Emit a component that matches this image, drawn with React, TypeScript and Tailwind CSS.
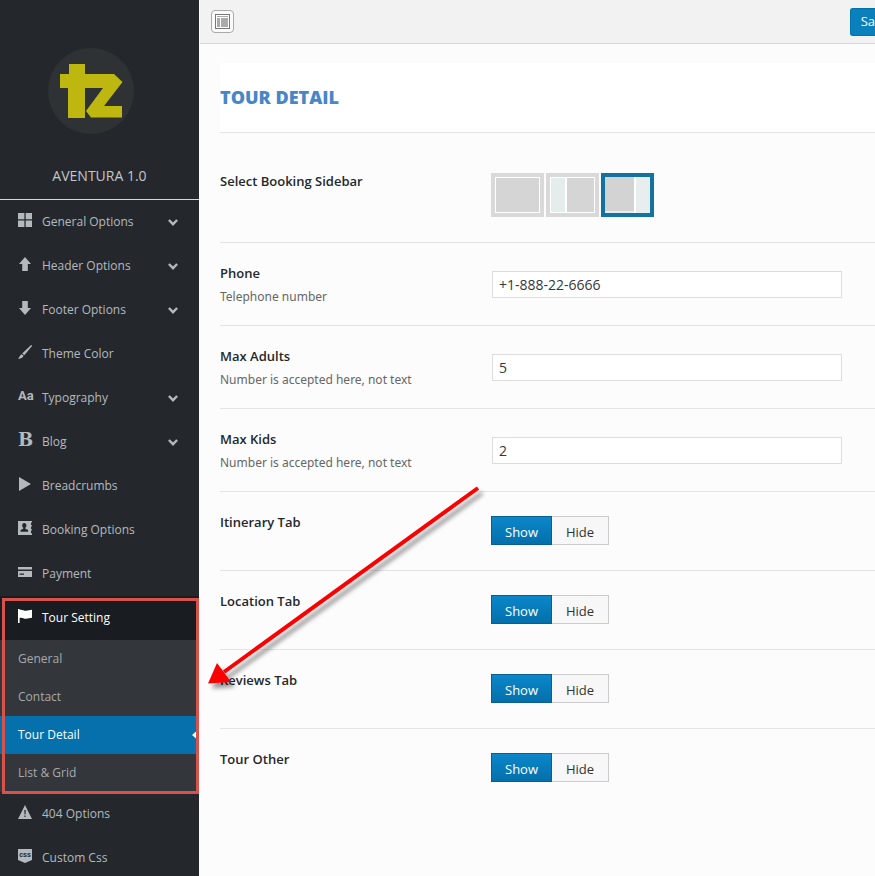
import React from "react";

type IconProps = { children: React.ReactNode };

function Icon({ children }: IconProps) {
  return (
    <svg viewBox="0 0 14 14" className="size-[14px]" fill="currentColor" aria-hidden="true">
      {children}
    </svg>
  );
}

type MenuItem = { label: string; icon: React.ReactNode; expandable?: boolean };

const topItems: MenuItem[] = [
  {
    label: "General Options",
    expandable: true,
    icon: <Icon><path d="M0 0h6.4v6.2H0zM7.7 0H14v6.2H7.7zM0 7.6h6.4V14H0zM7.7 7.6H14V14H7.7z" /></Icon>,
  },
  {
    label: "Header Options",
    expandable: true,
    icon: <Icon><path d="M7 0l6 7H9.8v7H4.2V7H1z" /></Icon>,
  },
  {
    label: "Footer Options",
    expandable: true,
    icon: <Icon><path d="M7 14L1 7h3.2V0h5.6v7H13z" /></Icon>,
  },
  {
    label: "Theme Color",
    icon: (
      <Icon>
        <path d="M13.8.2c.3.4.1.9-.2 1.400L6.300 10.200 4.200 8.600 12.600.6c.4-.4.9-.7 1.200-.4zM3.600 9.200l2 1.600C4.900 12.600 3 13.800.3 13.900.9 12.500 1.900 10.400 3.600 9.200z" />
      </Icon>
    ),
  },
  {
    label: "Typography",
    expandable: true,
    icon: <span aria-hidden="true" className="font-['Liberation_Sans_Narrow','Roboto',sans-serif] text-[13px] leading-[14px] font-bold">Aa</span>,
  },
  {
    label: "Blog",
    expandable: true,
    icon: <span aria-hidden="true" className="font-['DejaVu_Serif',serif] text-[18px] leading-[14px] font-bold">B</span>,
  },
  { label: "Breadcrumbs", icon: <Icon><path d="M1 0l12 7-12 7z" /></Icon> },
  {
    label: "Booking Options",
    icon: (
      <Icon>
        <path
          fillRule="evenodd"
          d="M0 0h14v1.500h-1v2.700h1v1.300h-1v2.700h1v1.300h-1v2.700h1V14H0zM6.300 2C5 2 4.200 3 4.200 4.300c0 1 .4 1.900 1 2.400v1L2.500 9v1.700h7.600V9L7.400 7.700v-1c.6-.5 1-1.400 1-2.400C8.400 3 7.600 2 6.300 2z"
        />
      </Icon>
    ),
  },
  {
    label: "Payment",
    icon: <Icon><path fillRule="evenodd" d="M0 2h14v2.500H0zM0 6h14v6H0zM1.500 8.500v1.200h4.500V8.500z" /></Icon>,
  },
];

const bottomItems: MenuItem[] = [
  {
    label: "404 Options",
    icon: <Icon><path fillRule="evenodd" d="M7 0l7 14H0zM6.300 5l.2 4.500h1L7.700 5zM6.400 10.500V12h1.200v-1.500z" /></Icon>,
  },
  {
    label: "Custom Css",
    icon: (
      <Icon>
        <path d="M0 0h14v11L7 14l-7-3z" />
        <text x="7" y="8" textAnchor="middle" fontSize="7" fontWeight="700" fill="#23282d" fontFamily="Liberation Sans, sans-serif">
          css
        </text>
      </Icon>
    ),
  },
];

const subItems = ["General", "Contact", "Tour Detail", "List & Grid"];

function MenuLink({ item, active }: { item: MenuItem; active?: boolean }) {
  return (
    <a
      href="#"
      className={
        active
          ? "flex h-11 items-center bg-[#191c21] pl-[18px] pr-[21px] text-white"
          : "flex h-11 items-center pl-[18px] pr-[21px] text-[#b4b9be]"
      }
    >
      <span className="flex w-6 items-center pb-1">{item.icon}</span>
      <span className="flex-1">{item.label}</span>
      {item.expandable && (
        <svg viewBox="0 0 10 7" className="h-[7px] w-[10px]" fill="none" stroke="currentColor" strokeWidth="2.400" aria-hidden="true">
          <path d="M.9 1L5 5.200 9.100 1" />
        </svg>
      )}
    </a>
  );
}

function Logo() {
  return (
    <svg viewBox="0 0 86 86" className="size-[86px]" role="img" aria-label="tz">
      <circle cx="43" cy="43" r="43" fill="#2f3234" />
      <path
        fill="#bdb70f"
        d="M21 16h16v10h29l8.500 8L56 58h18v11.500H43L38 63l17-23H37v30H20V40h-8V26h9z"
      />
    </svg>
  );
}

function Sidebar() {
  return (
    <nav className="w-[199px] shrink-0 bg-[#24282d] text-xs">
      <div className="flex h-[200px] flex-col border-b border-[#d5d7d8] pt-12">
        <div className="pl-12">
          <Logo />
        </div>
        <span className="mt-8 text-center text-sm leading-5 text-[#c3c6c9]">AVENTURA 1.0</span>
      </div>
      {topItems.map((item) => (
        <MenuLink key={item.label} item={item} />
      ))}
      <div className="relative">
        <MenuLink
          active
          item={{ label: "Tour Setting", icon: <Icon><path d="M0 0h1.600v.8C4 .2 5.800 1.800 8 1.800c2 0 4-1 6-1v8c-2 0-4 1-6 1-2.200 0-4-1.600-6.400-1V14H0z" /></Icon> }}
        />
        <div className="bg-[#33363b]">
          {subItems.map((label) =>
            label === "Tour Detail" ? (
              <a key={label} href="#" aria-current="page" className="flex h-[38px] items-center justify-between bg-[#0570ab] pl-[18px] text-white">
                {label}
                <svg viewBox="0 0 7 12" className="h-3 w-[7px]" fill="#fff" aria-hidden="true">
                  <path d="M7 0v12L0 6z" />
                </svg>
              </a>
            ) : (
              <a key={label} href="#" className="flex h-[38px] items-center pl-[18px] text-[#a7aaad]">
                {label}
              </a>
            ),
          )}
        </div>
        <div className="pointer-events-none absolute top-0.5 right-0 -bottom-0.5 left-0.5 border-3 border-[#d8524c]" />
      </div>
      {bottomItems.map((item) => (
        <MenuLink key={item.label} item={item} />
      ))}
    </nav>
  );
}

function TextRow({ id, label, hint, value }: { id: string; label: string; hint: string; value: string }) {
  return (
    <div className="flex h-[83px] border-b border-[#e4e4e4]">
      <div className="w-[271px] shrink-0 pt-[18px]">
        <label htmlFor={id} className="block font-semibold leading-6 text-[#23282d]">{label}</label>
        <p className="font-['Noto_Sans',sans-serif] text-xs leading-6 text-[#666]">{hint}</p>
      </div>
      <div className="flex-1 pt-7">
        <input
          id={id}
          type="text"
          defaultValue={value}
          className="mx-px h-[27px] w-full max-w-[350px] border border-[#ddd] bg-white px-1.5 text-sm text-[#32373c] outline-none"
        />
      </div>
    </div>
  );
}

function ToggleRow({ name, label, last }: { name: string; label: string; last?: boolean }) {
  return (
    <fieldset className={last ? "flex h-[79px]" : "flex h-[79px] border-b border-[#e4e4e4]"}>
      <div className="w-[271px] shrink-0 pt-[18px] font-semibold leading-6 text-[#23282d]" id={name}>{label}</div>
      <div className="flex pt-6" role="radiogroup" aria-labelledby={name}>
        <label className="relative flex h-[29px] w-[61px] items-center justify-center border border-[#0a5f92] bg-linear-to-b from-[#0b87ca] to-[#0470ab] pt-1 text-white">
          <input type="radio" name={name} defaultChecked className="sr-only" />
          Show
        </label>
        <label className="relative flex h-[29px] w-[57px] items-center justify-center border border-l-0 border-[#ccc] bg-[#f7f7f7] pt-1 text-[#333]">
          <input type="radio" name={name} className="sr-only" />
          Hide
        </label>
      </div>
    </fieldset>
  );
}

function LayoutChoice({ label, columns, checked }: { label: string; columns: React.ReactNode; checked?: boolean }) {
  return (
    <label
      className={
        checked
          ? "relative h-11 w-[53px] border-4 border-[#1273a0] bg-[#e8eeee]"
          : "relative h-11 w-[53px] border-4 border-[#d9d9d9] bg-[#d5d5d5]"
      }
    >
      <input type="radio" name="booking-sidebar" aria-label={label} defaultChecked={checked} className="sr-only" />
      <span className={checked ? "flex h-full" : "flex h-full border border-white"}>{columns}</span>
    </label>
  );
}

function Callout() {
  return (
    <svg viewBox="0 0 290 220" className="pointer-events-none absolute top-[480px] left-[200px] h-[220px] w-[290px]" aria-hidden="true">
      <defs>
        <filter id="arrow-shadow" x="-10%" y="-10%" width="120%" height="120%">
          <feDropShadow dx="4" dy="5" stdDeviation="2" floodColor="#000" floodOpacity="0.400" />
        </filter>
      </defs>
      <g filter="url(#arrow-shadow)" fill="#fa0505">
        <path d="M278 8L24 192" stroke="#fa0505" strokeWidth="4" />
        <path d="M8 203.500l9-20.500 14 19z" />
      </g>
    </svg>
  );
}

export default function App() {
  return (
    <div className="relative flex h-screen overflow-hidden bg-[#fcfcfc] font-['Open_Sans','Noto_Sans',sans-serif] text-[13px]">
      <Sidebar />
      <main className="min-w-0 flex-1 pl-px">
        <header className="flex h-11 items-center justify-between border-b border-[#d8d8d8] bg-[#f2f2f2] pl-[11px]">
          <button type="button" aria-label="Toggle panel" className="flex size-[23px] items-center justify-center rounded-sm border border-[#aaa] bg-[#fafafa]">
            <svg viewBox="0 0 15 15" className="size-[15px]" aria-hidden="true">
              <rect x=".5" y=".5" width="14" height="14" fill="#fff" stroke="#777" />
              <path fill="#aaa" d="M2 2h11v1H2zM2 4h3v9H2zM6 4h7v9H6z" />
            </svg>
          </button>
          <button type="button" className="h-7 rounded-l-[3px] border border-r-0 border-[#0073aa] bg-[#0a80bd] pl-2.5 text-white">
            Sa
          </button>
        </header>
        <form className="pt-[19px] pl-5">
          <div className="flex h-[70px] items-center border-b border-[#e4e4e4] bg-white pb-0.5">
            <h1 className="text-lg font-extrabold text-[#4787c7]">TOUR DETAIL</h1>
          </div>
          <fieldset className="flex h-[110px] border-b border-[#e4e4e4]">
            <div id="sidebar-label" className="w-[271px] shrink-0 pt-9 font-semibold leading-6 text-[#23282d]">Select Booking Sidebar</div>
            <div className="flex gap-0.5 pt-10" role="radiogroup" aria-labelledby="sidebar-label">
              <LayoutChoice label="Full width" columns={<span className="flex-1" />} />
              <LayoutChoice
                label="Left sidebar"
                columns={<><span className="w-4 border-r-2 border-white bg-[#e5ecec]" /><span className="flex-1" /></>}
              />
              <LayoutChoice
                checked
                label="Right sidebar"
                columns={<><span className="mb-0.5 flex-1 bg-[#d3d3d3]" /><span className="w-4 border-l-2 border-white" /></>}
              />
            </div>
          </fieldset>
          <TextRow id="phone" label="Phone" hint="Telephone number" value="+1-888-22-6666" />
          <TextRow id="adults" label="Max Adults" hint="Number is accepted here, not text" value="5" />
          <TextRow id="kids" label="Max Kids" hint="Number is accepted here, not text" value="2" />
          <ToggleRow name="itinerary" label="Itinerary Tab" />
          <ToggleRow name="location" label="Location Tab" />
          <ToggleRow name="reviews" label="Reviews Tab" />
          <ToggleRow name="other" label="Tour Other" last />
        </form>
      </main>
      <Callout />
    </div>
  );
}
